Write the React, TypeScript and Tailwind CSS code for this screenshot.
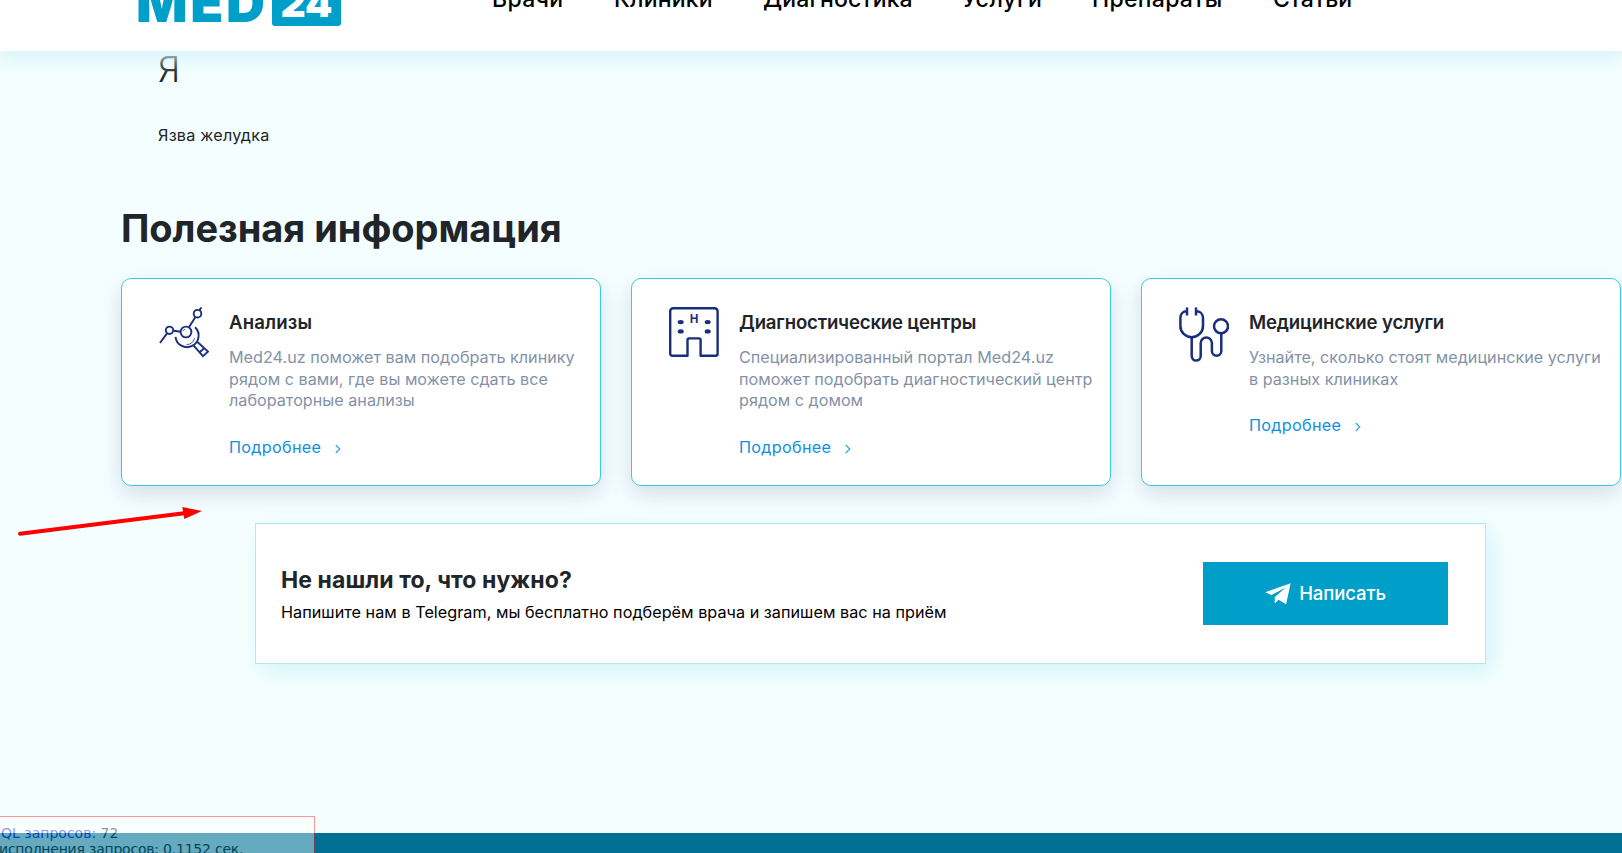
import type { ReactNode } from "react";

type NavItem = { label: string; className: string };

type InfoCardProps = {
  icon: ReactNode;
  title: string;
  titleClass: string;
  lines: string[];
};

const NAV: NavItem[] = [
  { label: "Врачи", className: "w-[122px] tracking-[0.3px]" },
  { label: "Клиники", className: "w-[149px] tracking-[0.2px]" },
  { label: "Диагностика", className: "w-[199px] tracking-[0.1px]" },
  { label: "Услуги", className: "w-[130px] tracking-[0.6px]" },
  { label: "Препараты", className: "w-[181px] tracking-[0.3px]" },
  { label: "Статьи", className: "tracking-normal" },
];

function AnalysisIcon() {
  return (
    <svg width="50" height="55" viewBox="0 0 50 55" fill="none" stroke="#1b2e7c" strokeWidth="1.9">
      <path d="M1 36 8 26.4M14.6 23.8 21.6 24.8M29.8 20.6 36.6 9.8M40.4 3.2 42.4.4" />
      <circle cx="10.5" cy="23.3" r="3.7" />
      <circle cx="27" cy="25" r="5.4" />
      <circle cx="38.5" cy="6.7" r="3.8" />
      <path d="M16.5 29.8a11.6 11.6 0 1 0 19.6-9.6" />
      <path d="M27.5 37.6a8.5 8.5 0 0 0 8-6.2M24 24.2a3 3 0 0 1 2-2" strokeWidth="0.8" />
      <path d="m34.4 38.4 9.6 10.8 5-4.6L38.2 34.8M40.6 45.4l4.8-4.4" />
    </svg>
  );
}

function HospitalIcon() {
  return (
    <svg width="50" height="50" viewBox="0 0 50 50" fill="none" stroke="#1b2e7c" strokeWidth="2.4">
      <path d="M18.5 48.7H3.2a2 2 0 0 1-2-2V4.2a3 3 0 0 1 3-3h41.4a3 3 0 0 1 3 3v42.5a2 2 0 0 1-2 2H31.6V33a1.6 1.6 0 0 0-1.6-1.6H20.1a1.6 1.6 0 0 0-1.6 1.6z" strokeLinejoin="round" />
      <g fill="#1b2e7c" stroke="none">
        <ellipse cx="11.7" cy="15.1" rx="3" ry="2.2" />
        <ellipse cx="38.7" cy="15.1" rx="3" ry="2.2" />
        <ellipse cx="11.7" cy="24.4" rx="3" ry="2.2" />
        <ellipse cx="38.7" cy="24.4" rx="3" ry="2.2" />
        <text x="25" y="15.6" textAnchor="middle" className="font-['Liberation_Sans'] text-[12px] font-bold">
          H
        </text>
      </g>
    </svg>
  );
}

function StethoscopeIcon() {
  return (
    <svg width="50" height="55" viewBox="0 0 50 55" fill="none" stroke="#1b2e7c" strokeWidth="2.5">
      <path d="M8 .4v8M17 .4v8M8 4C4 4.2 1.4 7 1.4 11v8a11.3 11.3 0 0 0 22.6 0v-8c0-4-3-6.8-7-7" />
      <path d="M12.7 30.3v18.8a4.5 4.5 0 0 0 9 0V36a5.6 5.6 0 0 1 11.2 0v8a4.7 4.7 0 0 0 9.4 0V27" />
      <circle cx="42" cy="19.3" r="7" />
    </svg>
  );
}

function InfoCard({ icon, title, titleClass, lines }: InfoCardProps) {
  return (
    <div className="flex h-52 w-[480px] shrink-0 gap-5 rounded-[10px] border border-[#38cddd] bg-white pt-7 pl-[37px] shadow-[0_8px_22px_rgba(0,50,110,0.15)]">
      <div className="shrink-0">{icon}</div>
      <div className="pt-[3px]">
        <h3 className={`text-[18.6px] leading-6 font-semibold whitespace-nowrap text-[#212529] ${titleClass}`}>{title}</h3>
        <p className="mt-[13px] text-[16.2px] leading-[21.6px] whitespace-nowrap text-[#8492a6]">
          {lines.map((line) => (
            <span key={line} className="block">
              {line}
            </span>
          ))}
        </p>
        <a className="mt-[25px] flex items-center text-[16.2px] leading-[21.6px] tracking-[0.3px] text-[#118fe0]">
          Подробнее
          <svg className="mt-0.5 ml-3.5" width="6" height="10" viewBox="0 0 6 10" fill="none" stroke="#35a3e3" strokeWidth="1.2">
            <path d="m.8 1 4 4-4 4" />
          </svg>
        </a>
      </div>
    </div>
  );
}

export default function App() {
  return (
    <div className="relative flex h-[853px] w-full flex-col overflow-hidden bg-[#f5feff] font-['Inter','Noto_Sans',sans-serif] text-[#212529]">
      <header className="relative z-10 flex h-[51px] shrink-0 bg-white shadow-[0_6px_20px_2px_#d3f3fa]">
        <div className="ml-[136px] flex h-[26px] w-[356px] items-end">
          <span className="mb-[-3px] w-[136px] text-[54px] leading-[52px] font-black tracking-[2.6px] text-[#009fc9]">
            MED
          </span>
          <span className="flex h-[50px] w-[69px] items-end justify-center rounded-[3px] bg-[#009fc9] text-[39px] leading-[46px] font-black text-white">
            24
          </span>
        </div>
        <nav className="-mt-[15px] flex text-[23px] leading-[29px] font-medium text-black">
          {NAV.map((item) => (
            <a key={item.label} className={item.className}>
              {item.label}
            </a>
          ))}
        </nav>
      </header>

      <main className="-mt-[5px] grow pl-[121px]">
        <div className="h-[157px] pl-[37px]">
          <p className="pt-0.5 text-[35px] leading-[43px] font-light text-[#212529]">Я</p>
          <p className="mt-[34px] text-[16.2px] leading-[21px] tracking-[0.22px]">Язва желудка</p>
        </div>

        <h2 className="pt-1 text-[38px] leading-[42px] font-bold tracking-[-0.05px]">Полезная информация</h2>

        <div className="mt-[29px] flex gap-[30px]">
          <InfoCard
            icon={<AnalysisIcon />}
            title="Анализы"
            titleClass="tracking-[0.15px]"
            lines={["Med24.uz поможет вам подобрать клинику", "рядом с вами, где вы можете сдать все", "лабораторные анализы"]}
          />
          <InfoCard
            icon={<HospitalIcon />}
            title="Диагностические центры"
            titleClass="tracking-[-0.18px]"
            lines={["Специализированный портал Med24.uz", "поможет подобрать диагностический центр", "рядом с домом"]}
          />
          <InfoCard
            icon={<StethoscopeIcon />}
            title="Медицинские услуги"
            titleClass="tracking-[-0.15px]"
            lines={["Узнайте, сколько стоят медицинские услуги", "в разных клиниках"]}
          />
        </div>

        <section className="mt-[37px] ml-[134px] flex h-[141px] w-[1231px] items-center justify-between border border-[#b8e7f1] bg-white pr-[37px] pl-[25px] shadow-[6px_8px_22px_rgba(0,188,220,0.15)]">
          <div className="pt-0.5">
            <h4 className="text-[23px] leading-[29px] font-bold tracking-[0.08px]">Не нашли то, что нужно?</h4>
            <p className="mt-[7px] text-[16.2px] leading-[21px] tracking-[0.03px] text-black">
              Напишите нам в Telegram, мы бесплатно подберём врача и запишем вас на приём
            </p>
          </div>
          <button className="flex h-[63px] w-[245px] items-center justify-center gap-2 bg-[#009fc9] text-[18.5px] font-medium tracking-[-0.1px] text-white">
            <svg width="26" height="22" viewBox="0 0 26 22" fill="#fff">
              <path d="M25.6.3.3 9.2 6.4 12 20.8 4.4 9.8 14v6.6l3.7-3.8 7.6 4.5L25.6.3z" />
            </svg>
            Написать
          </button>
        </section>
      </main>

      <footer className="h-5 shrink-0 bg-[#007194]" />

      <svg className="absolute top-[500px] left-[14px]" width="192" height="40" viewBox="0 0 192 40">
        <path d="M6 33.7 170 13.2" stroke="#f00" strokeWidth="4" strokeLinecap="round" />
        <path d="m188 11-19.7-4 2 12z" fill="#f00" />
      </svg>

      {/* debug panel, runs off the left and bottom edges */}
      <div className="absolute top-[816px] -left-5 h-[60px] w-[335px] border border-[#f00] bg-white pt-2 pl-5 font-['DejaVu_Sans'] text-sm leading-[16px] tracking-[-0.22px] whitespace-nowrap text-black opacity-40">
        <p className="tracking-normal">
          <span className="text-[#0000e0]">QL запросов:</span> 72
        </p>
        <p className="-ml-0.5">исполнения запросов: 0.1152 сек.</p>
      </div>
    </div>
  );
}
